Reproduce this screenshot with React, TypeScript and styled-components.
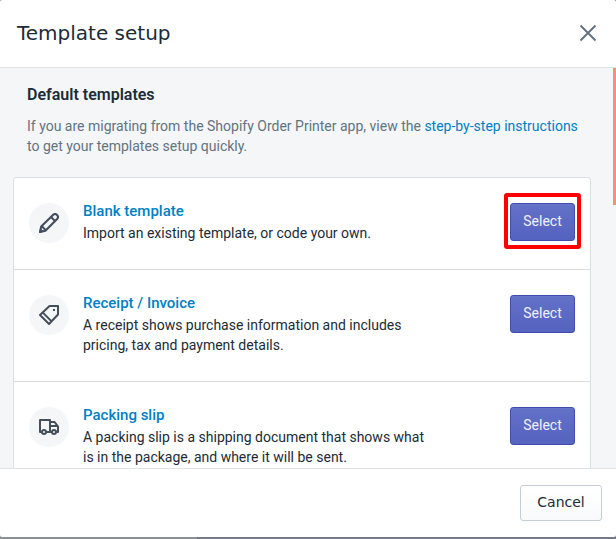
import React from "react";
import styled, { createGlobalStyle } from "styled-components";

const GlobalStyle = createGlobalStyle`
  *, *::before, *::after { box-sizing: border-box; }
  body { margin: 0; background: #8b9096; }
  h2, h3, h4, p, ul { margin: 0; padding: 0; }
`;

const Page = styled.div`
  height: 100vh;
  display: flex;
  flex-direction: column;
  padding-bottom: 2px;
  background: linear-gradient(90deg, #8b9096 32%, #747a8a 32%);
  color: #212b36;
  font-family: Roboto, sans-serif;
  font-size: 14px;
  line-height: 20px;
`;

const Dialog = styled.section`
  flex: 1;
  min-height: 0;
  display: flex;
  flex-direction: column;
  overflow: hidden;
  background: #fff;
  border-radius: 2px;
`;

const Header = styled.header`
  flex: none;
  display: flex;
  align-items: center;
  justify-content: space-between;
  padding: 19px 18px 20px 17px;
  border-bottom: 1px solid #dfe3e8;
`;

const Title = styled.h2`
  font: 400 20px/28px "DejaVu Sans", sans-serif;
`;

const CloseButton = styled.button`
  display: flex;
  padding: 0;
  border: 0;
  background: none;
  color: #637381;
  cursor: pointer;
`;

const Body = styled.div`
  flex: 1;
  min-height: 0;
  display: flex;
  position: relative;
  background: #f4f6f8;
`;

const Scroller = styled.div`
  flex: 1;
  overflow-y: auto;
  scrollbar-width: none;
  padding: 17px 25px 0 13px;
`;

const ScrollThumb = styled.div`
  position: absolute;
  top: 0;
  right: 0;
  width: 3px;
  height: 137px;
  background: #f4936f;
`;

const Intro = styled.div`
  display: flex;
  flex-direction: column;
  gap: 11px;
  padding: 0 12px 0 14px;
  margin-bottom: 21px;
  color: #637381;
`;

const Heading = styled.h3`
  color: #212b36;
  font-size: 16px;
  font-weight: 600;
  line-height: 20px;
`;

const Link = styled.a`
  color: #007fc4;
  text-decoration: none;
`;

const Card = styled.ul`
  list-style: none;
  background: #fff;
  border: 1px solid #dcdfe1;
  border-radius: 3px;
`;

const Row = styled.li`
  display: flex;
  align-items: flex-start;
  gap: 14px;
  padding: 25px 15px 26px;

  & + & {
    border-top: 1px solid #dcdcdc;
  }
`;

const IconDisc = styled.span`
  flex: none;
  display: grid;
  place-items: center;
  width: 40px;
  height: 40px;
  border-radius: 50%;
  background: #f4f6f8;
  color: #454f5b;
`;

const RowText = styled.div`
  flex: 1;
  margin-top: -4px;
`;

const RowTitle = styled.h4`
  font-size: 15px;
  font-weight: 500;
  line-height: 24px;
`;

const Description = styled.p`
  max-width: 350px;
`;

const SelectButton = styled.button<{ $marked?: boolean }>`
  flex: none;
  position: relative;
  min-width: 65px;
  height: 38px;
  padding: 0 11px 2px;
  border: 1px solid #3f4eae;
  border-radius: 3px;
  background: linear-gradient(#6371c7, #5563c1);
  box-shadow: inset 0 1px 0 #6774c8;
  color: #f1f2fa;
  font: 400 14px/20px Roboto, sans-serif;
  cursor: pointer;

  &::after {
    content: "";
    display: ${(p) => (p.$marked ? "block" : "none")};
    position: absolute;
    inset: -11px -7px -9px;
    border: 4px solid #fe0000;
    border-radius: 3px;
  }
`;

const Footer = styled.footer`
  flex: none;
  display: flex;
  justify-content: flex-end;
  padding: 16px 14px;
  border-top: 1px solid #dfe3e8;
`;

const CancelButton = styled.button`
  min-width: 82px;
  height: 36px;
  padding: 0 16px 2px;
  border: 1px solid #c4cdd5;
  border-radius: 3px;
  background: linear-gradient(#fff, #f9fafb);
  color: #212b36;
  font: 400 14px/20px "DejaVu Sans", sans-serif;
  cursor: pointer;
`;

const iconProps = {
  width: 20,
  height: 20,
  viewBox: "0 0 20 20",
  fill: "none",
  stroke: "currentColor",
  strokeWidth: 2,
  "aria-hidden": true,
} as const;

const PencilIcon = () => (
  <svg {...iconProps} strokeLinejoin="round">
    <path d="M1 19l1.2-5.4L14 1.9a2.9 2.9 0 0 1 4.1 4.1L6.4 17.8z" strokeWidth="2.1" />
    <path d="M12 4l4 4M2.8 13.2l4 4" />
    <path d="M0 20l1.2-5 3.8 3.8z" fill="currentColor" stroke="none" />
  </svg>
);

const TagIcon = () => (
  <svg {...iconProps} strokeLinejoin="round">
    <path d="M10.5 1H19v8.5L10 19l-9-9z" />
    <path d="M3.6 7.4l9 9" />
    <path d="M14 4h2v2h-2z" fill="currentColor" stroke="none" />
  </svg>
);

const TruckIcon = () => (
  <svg {...iconProps} strokeLinejoin="round">
    <path d="M2.8 15H1V3h10v12M7.2 15h5.6M11 5h4.6L19 9.6V15h-1.8M11 9h7" />
    <circle cx="5" cy="15" r="2" />
    <circle cx="15" cy="15" r="2" />
  </svg>
);

const templates = [
  {
    title: "Blank template",
    text: "Import an existing template, or code your own.",
    icon: <PencilIcon />,
    marked: true,
  },
  {
    title: "Receipt / Invoice",
    text: "A receipt shows purchase information and includes pricing, tax and payment details.",
    icon: <TagIcon />,
  },
  {
    title: "Packing slip",
    text: "A packing slip is a shipping document that shows what is in the package, and where it will be sent.",
    icon: <TruckIcon />,
  },
];

export default function App() {
  return (
    <Page>
      <GlobalStyle />
      <Dialog role="dialog" aria-labelledby="dialog-title">
        <Header>
          <Title id="dialog-title">Template setup</Title>
          <CloseButton type="button" aria-label="Close">
            <svg {...iconProps}>
              <path d="M2.5 2.5l15 15M17.5 2.5l-15 15" />
            </svg>
          </CloseButton>
        </Header>
        <Body>
          <Scroller>
            <Intro>
              <Heading>Default templates</Heading>
              <p>
                If you are migrating from the Shopify Order Printer app, view the{" "}
                <Link href="#instructions">step-by-step instructions</Link> to get
                your templates setup quickly.
              </p>
            </Intro>
            <Card>
              {templates.map((t) => (
                <Row key={t.title}>
                  <IconDisc>{t.icon}</IconDisc>
                  <RowText>
                    <RowTitle>
                      <Link href="#template">{t.title}</Link>
                    </RowTitle>
                    <Description>{t.text}</Description>
                  </RowText>
                  <SelectButton type="button" $marked={t.marked}>
                    Select
                  </SelectButton>
                </Row>
              ))}
            </Card>
          </Scroller>
          <ScrollThumb />
        </Body>
        <Footer>
          <CancelButton type="button">Cancel</CancelButton>
        </Footer>
      </Dialog>
    </Page>
  );
}
